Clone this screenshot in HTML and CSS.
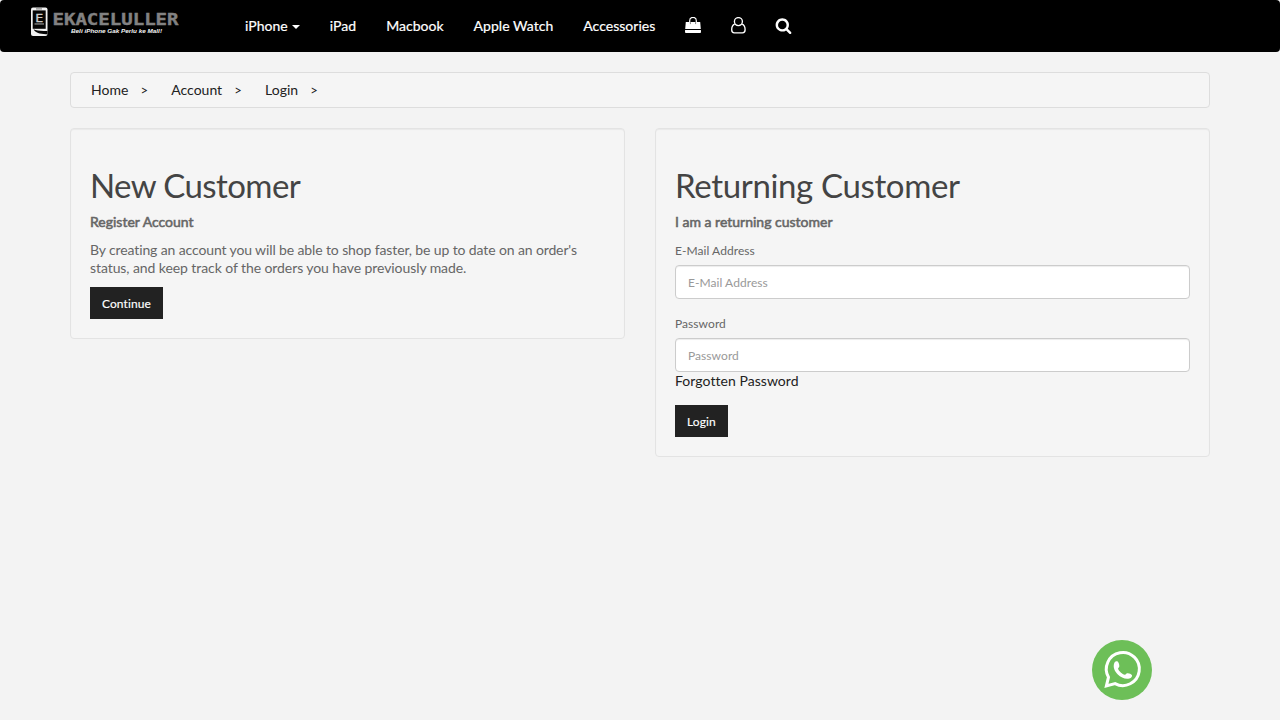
FILE: index.html
```html
<!DOCTYPE html>
<html lang="en">
<head>
<meta charset="utf-8">
<title>Account Login</title>
<link rel="stylesheet" href="styles.css">
</head>
<body>
<nav class="navbar">
  <a class="logo" href="#">
    <svg width="150" height="32" viewBox="0 0 150 32">
      <rect x="1" y="0.5" width="16.5" height="28.5" rx="2" fill="#f2f2f2"/>
      <rect x="2.7" y="3.4" width="13" height="18.4" fill="#050505"/>
      <rect x="6" y="1.4" width="6" height="1" fill="#777"/>
      <path d="M3.500 22.300c3 1.400 7 2 14 1.600v3.300c-7 .3-12-1.400-14-4.900z" fill="#050505"/>
      <text class="logo-mark" x="5.300" y="14.800" textLength="8" lengthAdjust="spacingAndGlyphs">E</text>
      <rect x="4.500" y="16.300" width="9.500" height="1.300" fill="#888"/>
      <text class="logo-name" x="22.500" y="18" textLength="126" lengthAdjust="spacingAndGlyphs">EKACELULLER</text>
      <text class="logo-tag" x="41" y="26" textLength="91" lengthAdjust="spacingAndGlyphs">Beli iPhone Gak Perlu ke Mall!</text>
    </svg>
  </a>
  <div class="menu">
    <a href="#">iPhone <span class="caret"></span></a>
    <a href="#">iPad</a>
    <a href="#">Macbook</a>
    <a href="#">Apple Watch</a>
    <a href="#">Accessories</a>
    <a href="#" aria-label="Cart"><svg width="16" height="18" viewBox="0 0 16 18"><path d="M.8 5.100h14.400l.6 6.900H.2zM.1 12.900h15.800l.1 2.200q0 .9-.9.900H.9Q0 16 0 15.100z" fill="#fff"/><path d="M4.700 7V3.700a3.300 3.300 0 0 1 6.600 0V7" fill="none" stroke="#fff" stroke-width="1.200"/><path d="M5.400 5.100v2M10.600 5.100v2" stroke="#333" stroke-width=".6"/></svg></a>
    <a href="#" aria-label="Account"><svg width="15" height="18" viewBox="0 0 15 18"><g fill="none" stroke="#fff" stroke-width="1.350"><circle cx="7.400" cy="4.600" r="4"/><path d="M3.700 7.200C1.500 8 .7 10 .7 12.700c0 2 1 3.100 2.600 3.100h8.200c1.600 0 2.600-1.100 2.600-3.100 0-2.700-.8-4.700-3-5.500"/></g></svg></a>
    <a href="#" aria-label="Search"><svg class="search" width="17" height="17" viewBox="0 0 1792 1792"><path fill="#fff" d="M1216 832q0-185-131.500-316.500t-316.500-131.500-316.500 131.500-131.500 316.500 131.500 316.500 316.500 131.500 316.500-131.500 131.500-316.500zm512 832q0 52-38 90t-90 38q-54 0-90-38l-343-342q-179 124-399 124-143 0-273.500-55.500t-225-150-150-225-55.500-273.500 55.500-273.500 150-225 225-150 273.500-55.500 273.500 55.500 225 150 150 225 55.500 273.500q0 220-124 399l343 343q37 37 37 90z"/></svg></a>
  </div>
</nav>
<main class="container">
  <ul class="breadcrumb">
    <li><a href="#">Home</a><span class="sep">&gt;</span></li>
    <li><a href="#">Account</a><span class="sep">&gt;</span></li>
    <li><a href="#">Login</a><span class="sep">&gt;</span></li>
  </ul>
  <div class="row">
    <section class="well">
      <h2 class="new">New Customer</h2>
      <p class="strong">Register Account</p>
      <p class="intro">By creating an account you will be able to shop faster, be up to date on an order's<br><span class="second">status, and keep track of the orders you have previously made.</span></p>
      <a class="btn" href="#">Continue</a>
    </section>
    <section class="well">
      <h2>Returning Customer</h2>
      <p class="strong">I am a returning customer</p>
      <form>
        <div class="group">
          <label for="email">E-Mail Address</label>
          <input id="email" type="text" placeholder="E-Mail Address">
        </div>
        <div class="group">
          <label for="password">Password</label>
          <input id="password" type="password" placeholder="Password">
          <a class="forgot" href="#">Forgotten Password</a>
        </div>
        <button class="btn" type="button">Login</button>
      </form>
    </section>
  </div>
</main>
<a class="whatsapp" href="#" aria-label="WhatsApp">
  <svg width="60" height="60" viewBox="0 0 60 60">
    <circle cx="30" cy="30" r="30" fill="#6dbf58"/>
    <path d="M14.400 45.900L16.500 37.200A16.500 16.500 0 1 1 23.100 43.600z" fill="none" stroke="#fff" stroke-width="3"/>
    <path d="M22.200 23.200c.8-1.800 2.600-2.400 3.700-1.400 1 1 1.600 3.200 1.400 4.600-.2 1-1.400 1.400-1.200 2.300.7 2.400 4.300 5.500 6.700 6 1 .2 1.300-1.200 2.400-1.500 1.600-.3 4 .6 4.700 1.800.7 1.300-.6 2.900-2.500 3.500-3.800 1.100-8.400-.8-11.600-4-3-3-5.100-7.400-3.600-11.300z" fill="#fff"/>
  </svg>
</a>
</body>
</html>
```
FILE: styles.css
```css
* { box-sizing: border-box; }
body {
  margin: 0;
  height: 720px;
  overflow: hidden;
  background: #f3f3f3;
  color: #666;
  font: 14px/18px Lato, sans-serif;
  font-variant-ligatures: none;
}
a { color: #222; text-decoration: none; }
.navbar {
  height: 52px;
  display: flex;
  background: #000;
  border-radius: 4px;
}
.logo { width: 200px; padding: 7px 0 0 30px; }
.logo svg, .whatsapp svg { display: block; }
.logo-mark { font: 11px "DejaVu Sans Mono", monospace; fill: #ccc; stroke: #ccc; stroke-width: 0.3px; }
.logo-name { font: bold 16px "DejaVu Sans Mono", monospace; fill: #828282; stroke: #828282; stroke-width: 0.4px; }
.logo-tag { font: italic bold 5.8px "Liberation Sans", sans-serif; fill: #f4f4f4; }
.menu { display: flex; align-items: center; padding-left: 30px; }
.menu a {
  display: flex;
  align-items: center;
  height: 52px;
  padding: 0 15px;
  color: #fff;
  letter-spacing: 0.03px;
  -webkit-text-stroke: 0.2px #fff;
}
.menu svg { display: block; }
.menu .search { position: relative; left: -1.5px; top: -0.5px; }
.caret {
  margin: 2px 0 0 4px;
  border-top: 4px solid #fff;
  border-left: 4px solid transparent;
  border-right: 4px solid transparent;
}
.container { width: 1140px; margin: 20px auto 0; }
.breadcrumb {
  display: flex;
  height: 36px;
  margin: 0 0 20px;
  padding: 8px 0;
  list-style: none;
  background: #f5f5f5;
  border: 1px solid #ddd;
  border-radius: 4px;
}
.breadcrumb li { padding: 0 3.2px 0 20px; }
.sep { margin-left: 12.2px; font-size: 13px; color: #222; }
.row { display: flex; align-items: flex-start; gap: 30px; }
.well {
  flex: 1;
  padding: 19px;
  background: #f5f5f5;
  border: 1px solid #e3e3e3;
  border-radius: 4px;
  box-shadow: inset 0 1px 1px rgba(0, 0, 0, 0.05);
}
h2 { margin: 19px 0 10px; font-size: 33px; line-height: 36px; font-weight: 400; color: #444; letter-spacing: -0.35px; }
.new { letter-spacing: -0.58px; }
p { margin: 0 0 10px; }
.intro { letter-spacing: -0.12px; }
.second { letter-spacing: -0.08px; }
.strong { -webkit-text-stroke: 0.55px #666; }
.btn {
  display: block;
  width: max-content;
  height: 32px;
  padding: 8px 12px 6px;
  border: 0;
  background: #222;
  color: #fff;
  font: 12px/18px Lato, sans-serif;
  letter-spacing: 0.08px;
  font-variant-ligatures: none;
  -webkit-text-stroke: 0.15px #fff;
}
.group { margin-bottom: 15px; }
label { display: block; margin-bottom: 5px; padding-top: 1px; font-size: 12px; line-height: 18px; letter-spacing: 0.06px; }
input {
  display: block;
  width: 100%;
  height: 34px;
  padding: 6px 12px;
  border: 1px solid #ccc;
  border-radius: 4px;
  background: #fff;
  box-shadow: inset 0 1px 1px rgba(0, 0, 0, 0.075);
  font: 12px/18px Lato, sans-serif;
  letter-spacing: 0.06px;
}
input::placeholder { color: #999; }
.forgot { display: block; letter-spacing: 0.05px; }
.whatsapp { position: fixed; left: 1092px; top: 640px; }
```
